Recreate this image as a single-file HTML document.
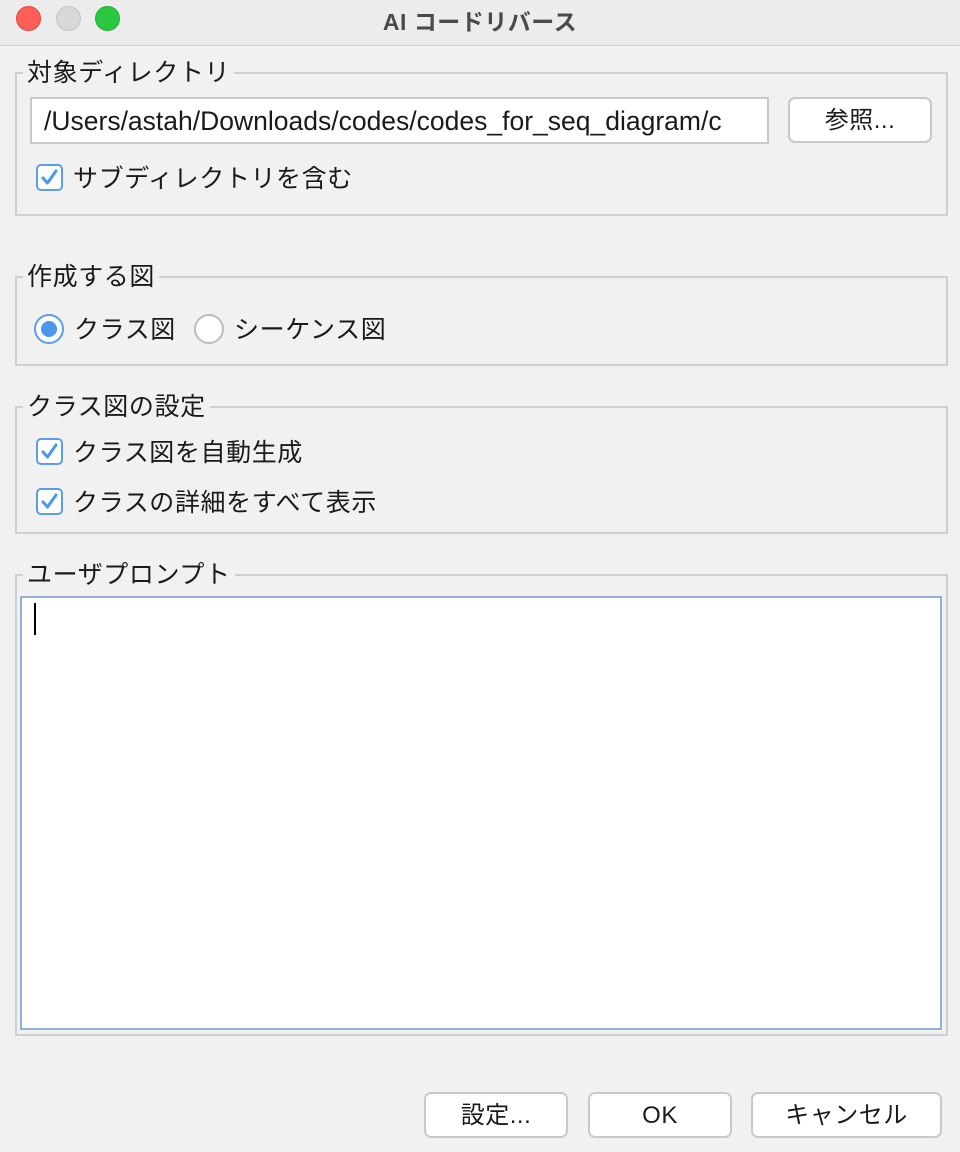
<!DOCTYPE html>
<html><head><meta charset="utf-8"><style>
*{box-sizing:border-box;margin:0;padding:0}
body{width:960px;height:1152px;background:#f1f1f1;font-family:"Liberation Sans","Noto Sans CJK JP",sans-serif;color:#1a1a1a;position:relative;overflow:hidden}
.abs{position:absolute}
.tb{left:0;top:0;width:960px;height:46px;background:#ececec;border-bottom:1px solid #d3d3d3}
.dot{width:25px;height:25px;border-radius:50%;top:6px}
.title{left:0;width:960px;top:3px;text-align:center;font-size:23px;letter-spacing:0.5px;font-weight:bold;color:#4a4a4a}
.grp{border:2px solid #cfcfcf;left:15px;width:933px}
.leg{background:#f1f1f1;font-size:25px;letter-spacing:0.6px;padding:0 4px;left:23px;line-height:28px}
.txt{font-size:25px;letter-spacing:0.6px;line-height:28px;white-space:nowrap}
.cb{width:27px;height:27px;border:2px solid #5a9ee8;border-radius:5px;background:#fff}
.btn{background:#fff;border:2px solid #c9c9c9;border-radius:7px;font-size:24px;letter-spacing:0.5px;text-align:center;line-height:43px;height:46px}
</style></head><body>
<div class="abs tb"></div>
<div class="abs dot" style="left:16px;background:#fe5f57;border:1px solid #e2463f"></div>
<div class="abs dot" style="left:56px;background:#d8d8d8;border:1px solid #c4c4c4"></div>
<div class="abs dot" style="left:95px;background:#2ac840;border:1px solid #1fae33"></div>
<div class="abs title">AI コードリバース</div>

<div class="abs grp" style="top:72px;height:144px"></div>
<div class="abs leg" style="top:59px">対象ディレクトリ</div>
<div class="abs" style="left:30px;top:97px;width:739px;height:47px;background:#fff;border:2px solid #c9c9c9"></div>
<div class="abs txt" style="left:44px;top:107px;font-size:26.5px;letter-spacing:0">/Users/astah/Downloads/codes/codes_for_seq_diagram/c</div>
<div class="abs btn" style="left:788px;top:97px;width:144px">参照...</div>
<div class="abs cb" style="left:36px;top:164px"><svg width="23" height="23" viewBox="0 0 23 23"><path d="M5 12 L9.5 17 L18 5" fill="none" stroke="#4a98ea" stroke-width="3" stroke-linecap="round" stroke-linejoin="round"/></svg></div>
<div class="abs txt" style="left:73px;top:165px">サブディレクトリを含む</div>

<div class="abs grp" style="top:276px;height:90px"></div>
<div class="abs leg" style="top:263px">作成する図</div>
<div class="abs" style="left:34px;top:314px;width:30px;height:30px;border-radius:50%;border:2px solid #5a9ee8;background:#fff"><div style="margin:5px;width:16px;height:16px;border-radius:50%;background:#4a98ea"></div></div>
<div class="abs txt" style="left:74px;top:316px">クラス図</div>
<div class="abs" style="left:194px;top:314px;width:30px;height:30px;border-radius:50%;border:2px solid #bcbcbc;background:#fff"></div>
<div class="abs txt" style="left:234px;top:316px">シーケンス図</div>

<div class="abs grp" style="top:406px;height:128px"></div>
<div class="abs leg" style="top:393px">クラス図の設定</div>
<div class="abs cb" style="left:36px;top:438px"><svg width="23" height="23" viewBox="0 0 23 23"><path d="M5 12 L9.5 17 L18 5" fill="none" stroke="#4a98ea" stroke-width="3" stroke-linecap="round" stroke-linejoin="round"/></svg></div>
<div class="abs txt" style="left:73px;top:439px">クラス図を自動生成</div>
<div class="abs cb" style="left:36px;top:488px"><svg width="23" height="23" viewBox="0 0 23 23"><path d="M5 12 L9.5 17 L18 5" fill="none" stroke="#4a98ea" stroke-width="3" stroke-linecap="round" stroke-linejoin="round"/></svg></div>
<div class="abs txt" style="left:73px;top:489px">クラスの詳細をすべて表示</div>

<div class="abs grp" style="top:574px;height:462px"></div>
<div class="abs leg" style="top:561px">ユーザプロンプト</div>
<div class="abs" style="left:20px;top:596px;width:922px;height:434px;background:#fff;border:2px solid #8fb1d6"></div>
<div class="abs" style="left:34px;top:603px;width:2px;height:32px;background:#000"></div>

<div class="abs btn" style="left:424px;top:1092px;width:144px">設定...</div>
<div class="abs btn" style="left:588px;top:1092px;width:144px">OK</div>
<div class="abs btn" style="left:751px;top:1092px;width:191px">キャンセル</div>
</body></html>
